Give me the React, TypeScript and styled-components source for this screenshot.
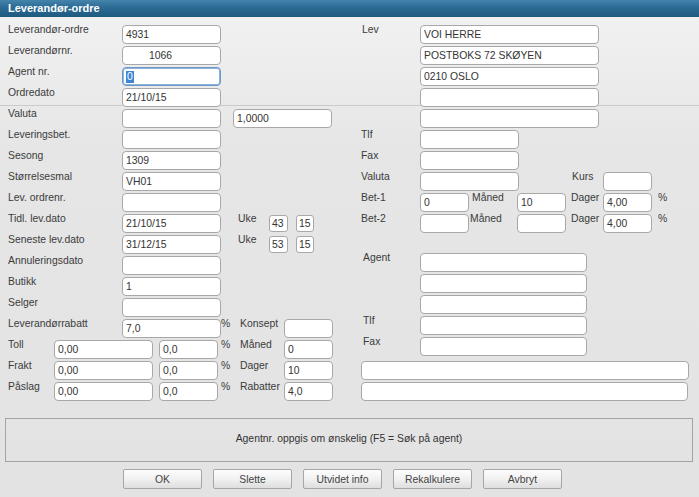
import React from "react";
import styled, { createGlobalStyle } from "styled-components";

const GlobalStyle = createGlobalStyle`
  html, body { margin: 0; padding: 0; background: #e4e4e4; }
  body { font-family: "Liberation Sans", Arial, sans-serif; }
`;

type LabelCell = { kind: "label"; row: number; x1: number; x2: number; text: string; lift?: boolean };
type FieldCell = {
  kind: "field";
  row: number;
  x1: number;
  x2: number;
  value?: string;
  indent?: number;
  focused?: boolean;
  small?: boolean;
  lift?: boolean;
};
type Cell = LabelCell | FieldCell;

const L = (row: number, x1: number, x2: number, text: string, lift?: boolean): LabelCell => ({ kind: "label", row, x1, x2, text, lift });
const F = (row: number, x1: number, x2: number, value = "", extra: Partial<FieldCell> = {}): FieldCell => ({
  kind: "field",
  row,
  x1,
  x2,
  value,
  ...extra,
});

const leftLabels = [
  "Leverandør-ordre",
  "Leverandørnr.",
  "Agent nr.",
  "Ordredato",
  "Valuta",
  "Leveringsbet.",
  "Sesong",
  "Størrelsesmal",
  "Lev. ordrenr.",
  "Tidl. lev.dato",
  "Seneste lev.dato",
  "Annuleringsdato",
  "Butikk",
  "Selger",
  "Leverandørrabatt",
];
const mainValues = ["4931", "1066", "0", "21/10/15", "", "", "1309", "VH01", "", "21/10/15", "31/12/15", "", "1", "", "7,0"];

const cells: Cell[] = [];
leftLabels.forEach((t, i) => {
  cells.push(L(i, 8, 122, t));
  cells.push(
    F(i, 122, 221, i === 2 ? "" : mainValues[i], {
      indent: i === 1 ? 26 : undefined,
      focused: i === 2,
    })
  );
});

// right header block
cells.push(L(0, 362, 420, "Lev"));
["VOI HERRE", "POSTBOKS 72 SKØYEN", "0210 OSLO", "", ""].forEach((v, i) => cells.push(F(i, 420, 599, v)));
cells.push(F(4, 233, 332, "1,0000"));
cells.push(L(5, 361, 420, "Tlf"), F(5, 420, 519));
cells.push(L(6, 361, 420, "Fax"), F(6, 420, 519));
cells.push(L(7, 361, 420, "Valuta"), F(7, 420, 519), L(7, 572, 603, "Kurs"), F(7, 603, 652));
cells.push(
  L(8, 361, 420, "Bet-1"),
  F(8, 420, 469, "0"),
  L(8, 472, 517, "Måned"),
  F(8, 517, 566, "10"),
  L(8, 571, 603, "Dager"),
  F(8, 603, 652, "4,00"),
  L(8, 658, 688, "%")
);
cells.push(
  L(9, 361, 420, "Bet-2"),
  F(9, 420, 469),
  L(9, 470, 517, "Måned"),
  F(9, 517, 566),
  L(9, 571, 603, "Dager"),
  F(9, 603, 652, "4,00"),
  L(9, 658, 688, "%")
);
// Uke
cells.push(L(9, 238, 269, "Uke"), F(9, 269, 288, "43", { small: true }), F(9, 296, 314, "15", { small: true }));
cells.push(L(10, 238, 269, "Uke"), F(10, 269, 288, "53", { small: true }), F(10, 296, 314, "15", { small: true }));
// Agent block (slightly lifted)
cells.push(L(11, 363, 420, "Agent", true));
[11, 12, 13, 14, 15].forEach((r) => cells.push(F(r, 420, 587, "", { lift: true })));
cells.push(L(14, 363, 420, "Tlf", true), L(15, 363, 420, "Fax", true));
// Konsept etc.
cells.push(L(14, 221, 233, "%"), L(14, 240, 284, "Konsept"), F(14, 284, 333));
const costRows: [string, string, string][] = [
  ["Toll", "Måned", "0"],
  ["Frakt", "Dager", "10"],
  ["Påslag", "Rabatter", "4,0"],
];
costRows.forEach(([a, b, v], i) => {
  const r = 15 + i;
  cells.push(L(r, 8, 54, a), F(r, 54, 153, "0,00"), F(r, 159, 218, "0,0"), L(r, 221, 233, "%"), L(r, 240, 284, b), F(r, 284, 333, v));
});
cells.push(F(16, 361, 689), F(17, 361, 688));

const stops = Array.from(new Set<number>([0, 699, ...cells.flatMap((c) => [c.x1, c.x2])])).sort((a, b) => a - b);
const columns = stops
  .slice(1)
  .map((x, i) => `${x - stops[i]}px`)
  .join(" ");
const col = (x: number) => stops.indexOf(x) + 1;

const Page = styled.div`
  width: 699px;
  height: 497px;
  overflow: hidden;
  color: #333;
  font-family: "Liberation Sans", Arial, sans-serif;
  font-size: 10.4px;
`;

const TitleBar = styled.div`
  height: 17px;
  padding-left: 8px;
  background: linear-gradient(to bottom, #4585ad 0%, #2b6b93 45%, #1f5a80 100%);
  color: #fff;
  font-weight: bold;
  font-size: 11px;
  line-height: 16px;
`;

const Body = styled.div`
  height: 480px;
  background:
    linear-gradient(#cbcbcb, #cbcbcb) 0 88px / 100% 1px no-repeat,
    linear-gradient(to bottom, #f1f1f1 0px, #e6e6e6 130px, #e3e3e3 480px);
  display: flex;
  flex-direction: column;
`;

const FormGrid = styled.div<{ $columns: string }>`
  display: grid;
  grid-template-columns: ${(p) => p.$columns};
  grid-template-rows: repeat(18, 19px);
  row-gap: 2px;
  margin-top: 8px;
`;

type Place = { $row: number; $c1: number; $c2: number; $lift?: boolean };

const Label = styled.span<Place>`
  grid-row: ${(p) => p.$row + 1};
  grid-column: ${(p) => `${p.$c1} / ${p.$c2}`};
  align-self: start;
  margin-top: ${(p) => (p.$lift ? -4 : -1)}px;
  min-width: 0;
  font-size: 10.4px;
  line-height: 12px;
  color: #3b3b3b;
  white-space: nowrap;
`;

const Field = styled.div<Place & { $small?: boolean; $focused?: boolean; $indent?: number }>`
  grid-row: ${(p) => p.$row + 1};
  grid-column: ${(p) => `${p.$c1} / ${p.$c2}`};
  align-self: start;
  box-sizing: border-box;
  min-width: 0;
  height: ${(p) => (p.$small ? 17 : 19)}px;
  margin-top: ${(p) => (p.$lift ? -3 : p.$small ? 1 : 0)}px;
  background: #fff;
  border: 1px solid ${(p) => (p.$focused ? "#6a97c8" : "#a8a8a8")};
  box-shadow: ${(p) => (p.$focused ? "inset 0 0 0 1px #8fb4dc" : "none")};
  border-radius: ${(p) => (p.$small ? 3 : 4)}px;
  padding-left: ${(p) => p.$indent ?? (p.$small ? 2 : 3)}px;
  font-size: 10.4px;
  line-height: ${(p) => (p.$small ? 15 : 17)}px;
  color: #333;
  white-space: nowrap;
  overflow: hidden;
`;

const Selected = styled.span`
  display: inline-block;
  background: #3c84d6;
  color: #fff;
  line-height: 12px;
  padding: 0 1px;
  vertical-align: middle;
`;

const MessageBox = styled.div`
  margin: 17px 6px 0 5px;
  height: 44px;
  box-sizing: border-box;
  border: 1px solid #a3a3a3;
  padding-bottom: 4px;
  display: flex;
  align-items: center;
  justify-content: center;
  font-size: 10.4px;
  color: #333;
`;

const ButtonRow = styled.div`
  display: flex;
  gap: 11px;
  margin-top: 7px;
  padding-left: 123px;
`;

const Button = styled.button`
  width: 79px;
  height: 20px;
  box-sizing: border-box;
  padding: 0;
  border: 1px solid #a6a6a6;
  border-radius: 2px;
  background: linear-gradient(to bottom, #fdfdfd 0%, #f1f1f1 50%, #dedede 100%);
  font-family: "Liberation Sans", Arial, sans-serif;
  font-size: 10.4px;
  color: #444;
`;

export default function App() {
  return (
    <Page>
      <GlobalStyle />
      <TitleBar>Leverandør-ordre</TitleBar>
      <Body>
        <FormGrid $columns={columns}>
          {cells.map((c, i) =>
            c.kind === "label" ? (
              <Label key={i} $row={c.row} $c1={col(c.x1)} $c2={col(c.x2)} $lift={c.lift}>
                {c.text}
              </Label>
            ) : (
              <Field
                key={i}
                $row={c.row}
                $c1={col(c.x1)}
                $c2={col(c.x2)}
                $lift={c.lift}
                $small={c.small}
                $focused={c.focused}
                $indent={c.indent}
              >
                {c.focused ? <Selected>0</Selected> : c.value}
              </Field>
            )
          )}
        </FormGrid>
        <MessageBox>Agentnr. oppgis om ønskelig (F5 = Søk på agent)</MessageBox>
        <ButtonRow>
          {["OK", "Slette", "Utvidet info", "Rekalkulere", "Avbryt"].map((b) => (
            <Button key={b}>{b}</Button>
          ))}
        </ButtonRow>
      </Body>
    </Page>
  );
}
